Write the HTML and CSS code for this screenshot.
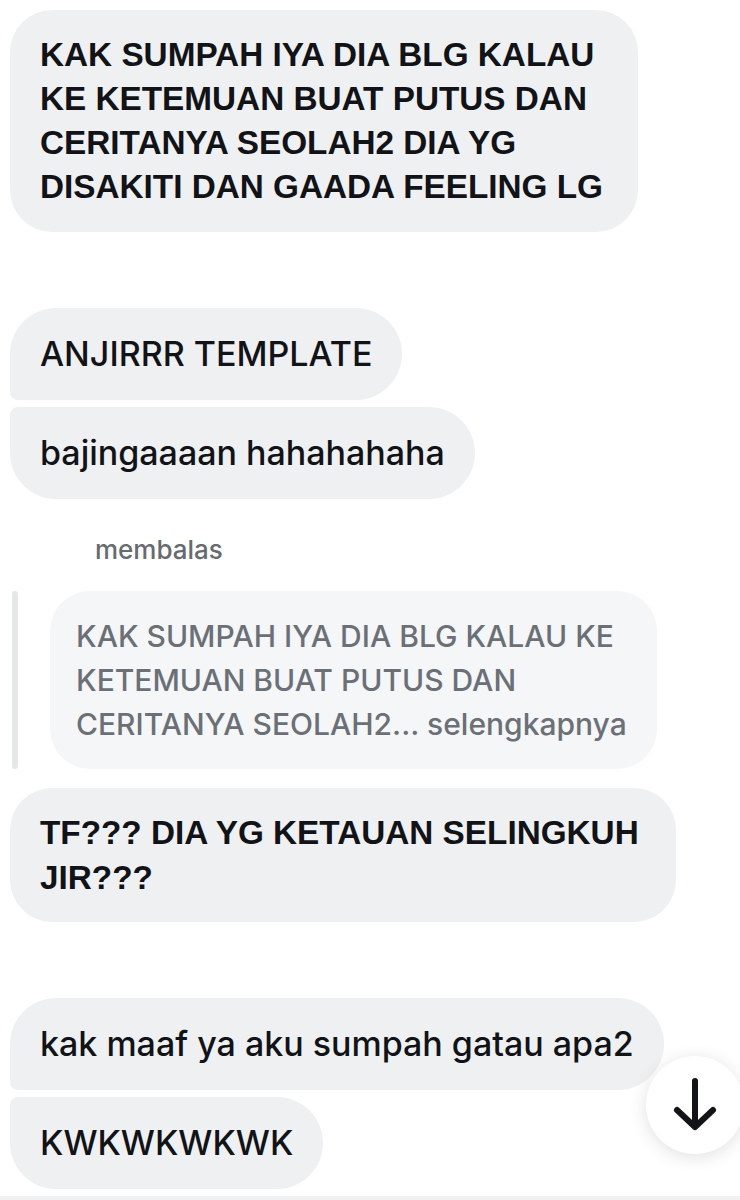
FILE: index.html
```html
<!DOCTYPE html>
<html lang="id">
<head>
<meta charset="utf-8">
<title>Chat</title>
<link rel="stylesheet" href="styles.css">
</head>
<body>
<main class="chat">
  <div class="bubble caps big">KAK SUMPAH IYA DIA BLG KALAU<br>KE KETEMUAN BUAT PUTUS DAN<br>CERITANYA SEOLAH2 DIA YG<br>DISAKITI DAN GAADA FEELING LG</div>

  <div class="bubble sans first b-anjir">ANJIRRR TEMPLATE</div>
  <div class="bubble sans last b-baji">bajingaaaan hahahahaha</div>

  <div class="replied-label">membalas</div>
  <div class="reply-row">
    <span class="reply-bar"></span>
    <div class="quote">KAK SUMPAH IYA DIA BLG KALAU KE<br>KETEMUAN BUAT PUTUS DAN<br>CERITANYA SEOLAH2... selengkapnya</div>
  </div>

  <div class="bubble caps b-tf">TF??? DIA YG KETAUAN SELINGKUH<br>JIR???</div>

  <div class="bubble sans first b-kak">kak maaf ya aku sumpah gatau apa2</div>
  <div class="bubble sans last b-kwk">KWKWKWKWK</div>

  <div class="composer-edge"></div>

  <button class="scroll-down" aria-label="Gulir ke bawah">
    <svg viewBox="0 0 48 56" width="48" height="56" aria-hidden="true">
      <path d="M24 4 V50 M6 33 L24 50 L42 33" fill="none" stroke="#121417" stroke-width="6" stroke-linecap="round" stroke-linejoin="round"/>
    </svg>
  </button>
</main>
</body>
</html>
```

FILE: styles.css
```css
html, body {
  margin: 0;
  padding: 0;
  background: #ffffff;
}

body {
  width: 740px;
  height: 1200px;
  overflow: hidden;
}

.chat {
  position: relative;
  height: 1200px;
  box-sizing: border-box;
  padding: 10px 0 0 10px;
  display: flex;
  flex-direction: column;
  align-items: flex-start;
}

.bubble {
  background: #eef0f2;
  color: #111317;
  border-radius: 42px;
  box-sizing: border-box;
  white-space: nowrap;
}

.caps {
  font-family: "Liberation Sans", Arial, sans-serif;
  font-weight: 700;
  font-size: 33.3px;
  line-height: 44px;
}

.sans {
  font-family: Inter, "Noto Sans", sans-serif;
  font-weight: 500;
  font-size: 34px;
  line-height: 44px;
  padding: 24px 30px 24px 30px;
  border-radius: 46px;
}

.big {
  padding: 23px 35px 23px 30px;
}

.first {
  margin-top: 76px;
  border-bottom-left-radius: 8px;
}

.last {
  margin-top: 7px;
  border-top-left-radius: 8px;
}

.replied-label {
  margin: 36px 0 0 85px;
  font-family: Inter, "Noto Sans", sans-serif;
  font-weight: 500;
  font-size: 26px;
  line-height: 30px;
  color: #676b70;
}

.reply-row {
  margin-top: 26px;
  display: flex;
  gap: 32px;
  align-items: stretch;
}

.reply-bar {
  width: 6px;
  margin-left: 2px;
  background: #e6e7e9;
  border-radius: 3px;
}

.quote {
  background: #f5f6f8;
  color: #6b7076;
  font-family: Inter, "Noto Sans", sans-serif;
  font-weight: 500;
  font-size: 30px;
  line-height: 44px;
  padding: 23px 30px 23px 26px;
  border-radius: 40px;
  white-space: nowrap;
}

.b-tf {
  margin-top: 19px;
  line-height: 45px;
  padding: 22px 37px 22px 30px;
}

.composer-edge {
  margin-top: 7px;
  align-self: stretch;
  margin-left: -10px;
  height: 8px;
  background: #eff1f2;
}

.scroll-down {
  position: absolute;
  left: 646px;
  top: 1056px;
  width: 98px;
  height: 98px;
  border: none;
  border-radius: 50%;
  background: #ffffff;
  box-shadow: 0 3px 18px rgba(0, 0, 0, 0.12);
  display: flex;
  align-items: center;
  justify-content: center;
  padding: 0;
}
```
